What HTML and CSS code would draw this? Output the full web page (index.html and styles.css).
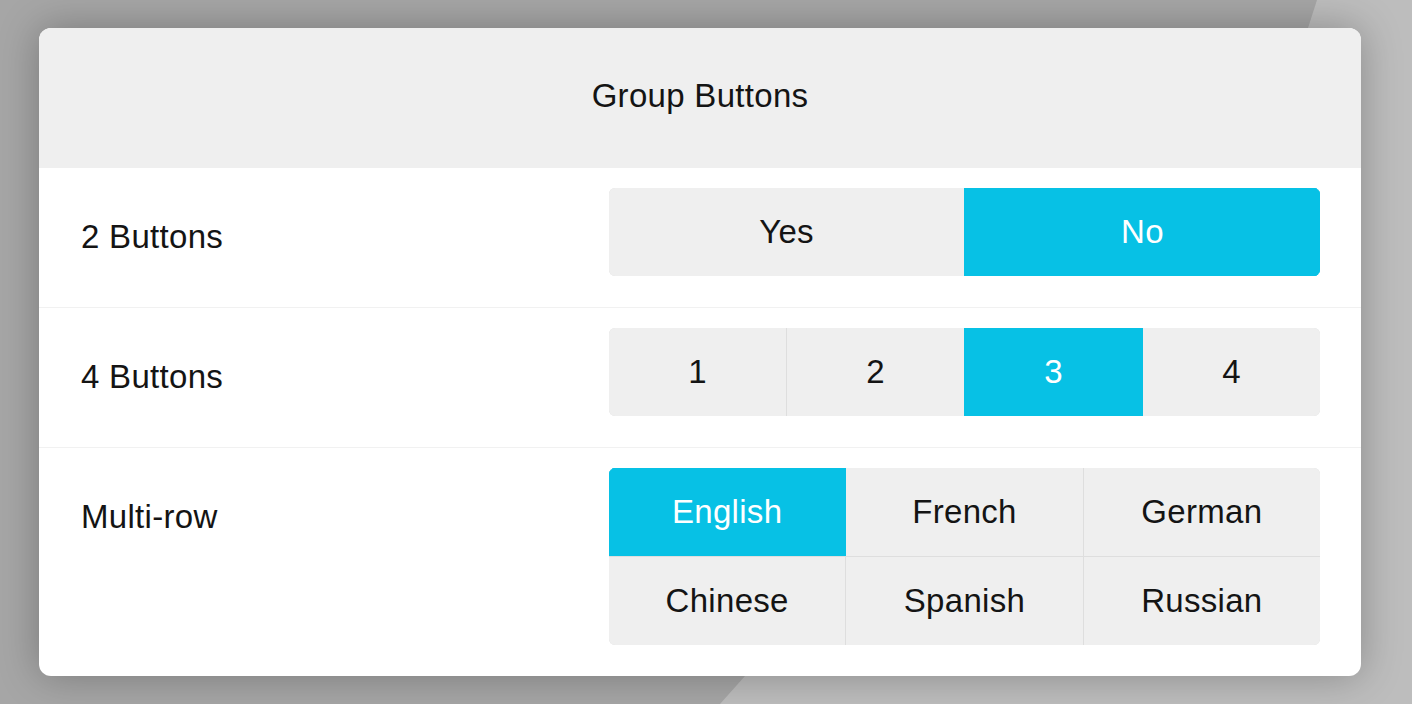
FILE: index.html
```html
<!DOCTYPE html>
<html lang="en">
<head>
<meta charset="utf-8">
<title>Group Buttons</title>
<link rel="stylesheet" href="styles.css">
</head>
<body>
<div class="stage">
  <div class="card">
    <div class="card-header">Group Buttons</div>
    <div class="row">
      <div class="label">2 Buttons</div>
      <div class="group cols-2">
        <div class="btn">Yes</div>
        <div class="btn active">No</div>
      </div>
    </div>
    <div class="row">
      <div class="label">4 Buttons</div>
      <div class="group cols-4">
        <div class="btn">1</div>
        <div class="btn">2</div>
        <div class="btn active">3</div>
        <div class="btn">4</div>
      </div>
    </div>
    <div class="row last">
      <div class="label">Multi-row</div>
      <div class="group cols-3">
        <div class="btn active">English</div>
        <div class="btn">French</div>
        <div class="btn">German</div>
        <div class="btn">Chinese</div>
        <div class="btn">Spanish</div>
        <div class="btn">Russian</div>
      </div>
    </div>
  </div>
</div>
</body>
</html>
```
FILE: styles.css
```css
html, body {
  margin: 0;
  padding: 0;
}
body {
  width: 1412px;
  height: 704px;
  overflow: hidden;
  font-family: "Liberation Sans", Arial, sans-serif;
  color: #141414;
  letter-spacing: 0.3px;
  background-color: #a6a6a6;
  background-image: url("data:image/svg+xml,%3Csvg xmlns='http://www.w3.org/2000/svg' width='1412' height='704'%3E%3Cpolygon points='1317,0 1412,0 1412,704 720,704 745,676 1308,28' fill='%23bdbdbd'/%3E%3C/svg%3E");
  background-repeat: no-repeat;
}
.stage {
  padding: 28px 0 0 39px;
}
.card {
  width: 1322px;
  height: 648px;
  background: #ffffff;
  border-radius: 12px;
  overflow: hidden;
  box-shadow: 0 0 40px rgba(0, 0, 0, 0.28);
}
.card-header {
  box-sizing: border-box;
  height: 140px;
  padding-top: 48px;
  background: #efefef;
  text-align: center;
  font-size: 33px;
  line-height: 40px;
}
.row {
  display: flex;
  align-items: flex-start;
  padding: 20px 41px 31px 42px;
  border-bottom: 1px solid #f1f1f1;
}
.row.last {
  border-bottom: none;
  padding-bottom: 32px;
}
.label {
  flex: 1;
  padding-top: 29px;
  font-size: 33px;
  line-height: 40px;
}
.group {
  width: 711px;
  display: grid;
  gap: 1px;
  background: #dedede;
  border-radius: 6px;
  overflow: hidden;
}
.cols-2 { grid-template-columns: repeat(2, 1fr); }
.cols-4 { grid-template-columns: repeat(4, 1fr); }
.cols-3 { grid-template-columns: repeat(3, 1fr); grid-auto-rows: 88px; }
.btn {
  height: 88px;
  display: flex;
  align-items: center;
  justify-content: center;
  background: #efefef;
  font-size: 33px;
  color: #141414;
}
.cols-3 .btn { height: auto; }
.btn.active {
  background: #07c1e5;
  color: #ffffff;
  box-shadow: -1px 0 0 #07c1e5, 1px 0 0 #07c1e5;
}
```
